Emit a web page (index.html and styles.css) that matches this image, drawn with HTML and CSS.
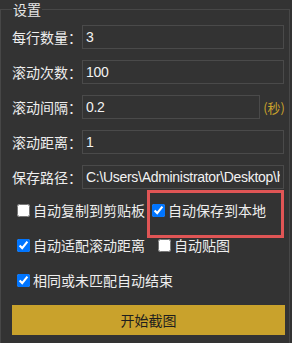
FILE: index.html
```html
<!DOCTYPE html>
<html>
<head>
<meta charset="utf-8">
<title>设置</title>
<link rel="stylesheet" href="styles.css">
</head>
<body>
<fieldset class="settings">
    <legend>设置</legend>

    <div class="field-row">
        <label class="field-label">每行数量：</label>
        <input type="text" class="field-input" value="3">
    </div>
    <div class="field-row">
        <label class="field-label">滚动次数：</label>
        <input type="text" class="field-input" value="100">
    </div>
    <div class="field-row">
        <label class="field-label">滚动间隔：</label>
        <input type="text" class="field-input" value="0.2">
        <span class="unit">(秒)</span>
    </div>
    <div class="field-row">
        <label class="field-label">滚动距离：</label>
        <input type="text" class="field-input" value="1">
    </div>
    <div class="field-row">
        <label class="field-label">保存路径：</label>
        <input type="text" class="field-input" value="C:\Users\Administrator\Desktop\h">
    </div>

    <div class="check-row">
        <label class="check"><input type="checkbox">自动复制到剪贴板</label>
        <label class="check highlight"><input type="checkbox" checked>自动保存到本地</label>
    </div>
    <div class="check-row">
        <label class="check"><input type="checkbox" checked>自动适配滚动距离</label>
        <label class="check second"><input type="checkbox">自动贴图</label>
    </div>
    <div class="check-row">
        <label class="check"><input type="checkbox" checked>相同或未匹配自动结束</label>
    </div>

    <button class="start-btn">开始截图</button>
</fieldset>
</body>
</html>
```

FILE: styles.css
```css
body {
    margin: 0;
    background-color: #333333;
    color: #eeeeee;
    font-family: "Noto Sans CJK SC", "Noto Sans", sans-serif;
    font-size: 14px;
    overflow: hidden;
}

.settings {
    margin: 0 2px 0 0;
    padding: 7px 4px 20px 11px;
    border: 1px solid #474747;
    min-width: 0;
    min-height: 340px;
    box-sizing: border-box;
}

.settings legend {
    padding: 0 1px;
    line-height: 18px;
    margin-top: -1px;
    color: #e6e6e6;
}

.field-row {
    display: flex;
    align-items: center;
    height: 24px;
    margin-bottom: 11px;
}

.field-label {
    width: 70px;
    flex: none;
    line-height: 20px;
}

.field-input {
    flex: 1 1 0;
    width: 0;
    min-width: 0;
    height: 24px;
    box-sizing: border-box;
    margin: 0 1px 0 0;
    padding: 0 3px;
    background-color: #333333;
    border: 1px solid #4a4a4a;
    color: #f2f2f2;
    font-family: "Liberation Sans", "Noto Sans CJK SC", sans-serif;
    font-size: 14px;
    letter-spacing: -0.3px;
    outline: none;
}

.unit {
    margin-left: 2px;
    color: #c9a22c;
    font-size: 13px;
}

.check-row {
    display: flex;
    align-items: center;
    height: 20px;
    margin-bottom: 15px;
}

.check {
    display: flex;
    align-items: center;
    line-height: 20px;
    white-space: nowrap;
}

.check input {
    width: 13px;
    height: 13px;
    margin: 0 3px 0 5px;
}

.check.highlight {
    position: relative;
    margin-left: 2px;
}

.check.highlight::after {
    content: "";
    position: absolute;
    left: 0;
    top: -10px;
    width: 137px;
    height: 48px;
    box-sizing: border-box;
    border: 3px solid #e05555;
}

.check.second {
    margin-left: 8px;
}

.start-btn {
    display: block;
    width: 100%;
    height: 30px;
    margin: 0;
    background-color: #c9a22c;
    border: none;
    color: #1e1e1e;
    font-family: "Noto Sans CJK SC", "Noto Sans", sans-serif;
    font-size: 14px;
}
```
